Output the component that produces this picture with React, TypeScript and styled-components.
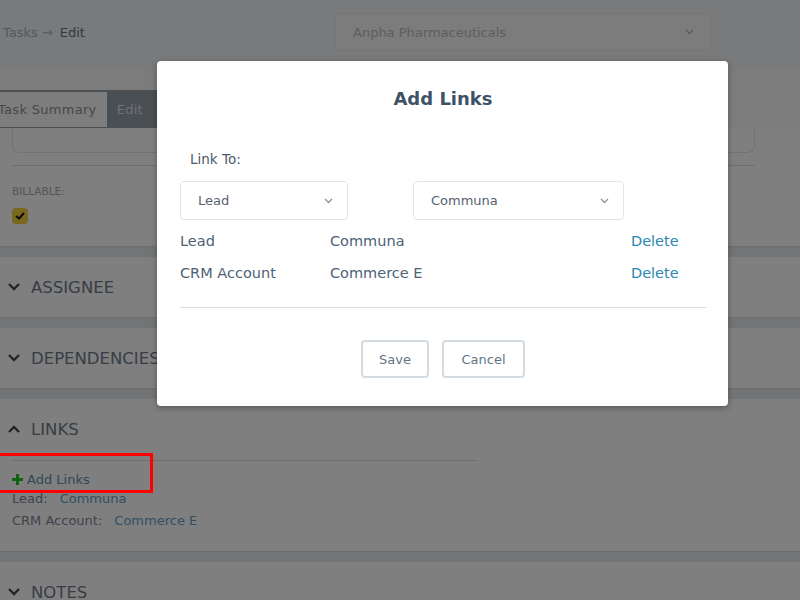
import styled, { createGlobalStyle } from "styled-components";

const GlobalStyle = createGlobalStyle`
  html, body {
    margin: 0;
    padding: 0;
    height: 100%;
    overflow: hidden;
  }
  body {
    font-family: "DejaVu Sans", "Noto Sans", sans-serif;
    background: #e6e8eb;
  }
`;

const Page = styled.div`
  position: relative;
  width: 800px;
  height: 600px;
  overflow: hidden;
  background: #e6e8eb;
`;

const Header = styled.header`
  height: 70px;
  box-sizing: border-box;
  padding: 13px 89px 0 3px;
  display: flex;
  align-items: flex-start;
  justify-content: space-between;
  background: #f3f4f6;
`;

const Crumbs = styled.div`
  display: flex;
  align-items: center;
  gap: 4px;
  height: 38px;
  font-size: 13px;
  color: #aab0ba;
  span:last-child {
    color: #6c7078;
    margin-left: 3px;
  }
`;

const OrgSelect = styled.div`
  width: 376px;
  height: 38px;
  box-sizing: border-box;
  padding: 0 16px 0 17px;
  display: flex;
  align-items: center;
  justify-content: space-between;
  background: #f8f8f8;
  border: 1px solid #ececec;
  border-radius: 4px;
  font-size: 13px;
  color: #bcbcbc;
`;

const SubBar = styled.div`
  height: 20px;
  background: #f8f9fa;
`;

const TabRow = styled.div`
  height: 38px;
  background: #f8f9fa;
  display: flex;
`;

const TabGroup = styled.div`
  display: flex;
  margin-left: -14px;
  padding: 2px 0 1px 2px;
  background: #949ea9;
`;

const Tab = styled.div<{ $active?: boolean }>`
  display: flex;
  align-items: center;
  padding: 0 10px;
  font-size: 13px;
  letter-spacing: 0.3px;
  background: ${(p) => (p.$active ? "transparent" : "#fbfbfb")};
  color: ${(p) => (p.$active ? "#dfe3e8" : "#8a9099")};
  min-width: ${(p) => (p.$active ? "60px" : "auto")};
`;

const Card = styled.section`
  background: #ffffff;
  padding: 0 45px 22px 12px;
  border-bottom: 1px solid #d8dbe0;
  margin-bottom: 10px;
`;

const Field = styled.div`
  height: 24px;
  border: 1px solid #e1e4e8;
  border-top: none;
  border-radius: 0 0 8px 8px;
`;

const Rule = styled.div<{ $width?: string }>`
  height: 1px;
  width: ${(p) => p.$width || "100%"};
  background: #dcdfe3;
`;

const SmallLabel = styled.div`
  margin-top: 19px;
  font-size: 10.5px;
  line-height: 13px;
  color: #a4acb6;
`;

const Check = styled.div`
  margin-top: 10px;
  width: 16px;
  height: 16px;
  border-radius: 4px;
  background: #f2d03c;
  display: flex;
  align-items: center;
  justify-content: center;
`;

const Section = styled.section`
  background: #ffffff;
  border-bottom: 1px solid #d8dbe0;
  margin-bottom: 10px;
`;

const SectionHead = styled.div`
  height: 60px;
  display: flex;
  align-items: center;
  gap: 11px;
  padding-left: 8px;
  font-size: 16.5px;
  color: #707a8a;
  white-space: nowrap;
`;

const LinksBody = styled.div`
  padding: 1px 12px 22px;
`;

const AddLink = styled.div`
  margin-top: 9px;
  display: flex;
  align-items: center;
  gap: 4px;
  height: 18px;
  font-size: 13px;
  color: #5c8fb0;
`;

const LinkLine = styled.div<{ $gap?: number }>`
  display: flex;
  gap: ${(p) => p.$gap || 12}px;
  margin-top: ${(p) => (p.$gap ? 4 : 1)}px;
  height: 18px;
  align-items: center;
  font-size: 13px;
  color: #7c8598;
  b {
    font-weight: normal;
    color: #5e9fc6;
  }
`;

const Overlay = styled.div`
  position: absolute;
  inset: 0;
  background: rgba(0, 0, 0, 0.5);
`;

const Annotation = styled.div`
  position: absolute;
  left: -5px;
  top: 453px;
  width: 158px;
  height: 40px;
  box-sizing: border-box;
  border: 3px solid #ff0000;
`;

const Modal = styled.div`
  position: absolute;
  left: 157px;
  top: 61px;
  width: 571px;
  height: 345px;
  box-sizing: border-box;
  padding: 27px 22px 0 23px;
  background: #ffffff;
  border-radius: 4px;
  box-shadow: 0 2px 6px rgba(0, 0, 0, 0.3);
`;

const Title = styled.h2`
  margin: 0;
  text-align: center;
  font-size: 18px;
  line-height: 22px;
  font-weight: bold;
  color: #3e5266;
`;

const FieldLabel = styled.div`
  margin-top: 40px;
  padding-left: 10px;
  font-size: 13.5px;
  line-height: 18px;
  color: #4b5a6a;
`;

const SelectRow = styled.div`
  margin-top: 13px;
  display: flex;
  gap: 65px;
`;

const Select = styled.div<{ $width: number }>`
  width: ${(p) => p.$width}px;
  height: 39px;
  box-sizing: border-box;
  padding: 0 14px 0 17px;
  display: flex;
  align-items: center;
  justify-content: space-between;
  border: 1px solid #e2e6ec;
  border-radius: 4px;
  font-size: 13px;
  color: #56626f;
`;

const LinkTable = styled.div`
  margin-top: 5px;
  display: grid;
  grid-template-columns: 150px 1fr 75px;
  grid-auto-rows: 32px;
  align-items: center;
  font-size: 14.5px;
  color: #4e6175;
`;

const DeleteLink = styled.span`
  color: #2e86b0;
  cursor: pointer;
`;

const Divider = styled.div`
  margin-top: 18px;
  height: 1px;
  background: #d9dde2;
`;

const Actions = styled.div`
  margin-top: 32px;
  display: flex;
  justify-content: center;
  gap: 13px;
`;

const Button = styled.button<{ $width: number }>`
  width: ${(p) => p.$width}px;
  height: 38px;
  background: #ffffff;
  border: 2px solid #d3dbe3;
  border-radius: 4px;
  font-family: inherit;
  font-size: 13px;
  color: #637487;
`;

const Chevron = ({ up = false }: { up?: boolean }) => (
  <svg width="12" height="8" viewBox="0 0 12 8">
    <polyline
      points={up ? "1,7 6,2 11,7" : "1,1 6,6 11,1"}
      fill="none"
      stroke="#434a55"
      strokeWidth="2.4"
    />
  </svg>
);

const Caret = ({ color = "#8693a1" }: { color?: string }) => (
  <svg width="9" height="6" viewBox="0 0 9 6">
    <polyline points="1,1 4.5,4.5 8,1" fill="none" stroke={color} strokeWidth="1.3" />
  </svg>
);

const links = [
  { type: "Lead", name: "Communa" },
  { type: "CRM Account", name: "Commerce E" },
];

export default function App() {
  return (
    <Page>
      <GlobalStyle />
      <Header>
        <Crumbs>
          <span>Tasks</span>
          <span>→</span>
          <span>Edit</span>
        </Crumbs>
        <OrgSelect>
          Anpha Pharmaceuticals
          <Caret color="#b0b0b0" />
        </OrgSelect>
      </Header>
      <SubBar />
      <TabRow>
        <TabGroup>
          <Tab>Task Summary</Tab>
          <Tab $active>Edit</Tab>
        </TabGroup>
      </TabRow>
      <Card>
        <Field />
        <Rule style={{ marginTop: 12 }} />
        <SmallLabel>BILLABLE:</SmallLabel>
        <Check>
          <svg width="10" height="8" viewBox="0 0 10 8">
            <polyline points="1,4 4,6.5 9,1" fill="none" stroke="#1a1a1a" strokeWidth="2" />
          </svg>
        </Check>
      </Card>
      <Section>
        <SectionHead>
          <Chevron />
          ASSIGNEE
        </SectionHead>
      </Section>
      <Section>
        <SectionHead>
          <Chevron />
          DEPENDENCIES
        </SectionHead>
      </Section>
      <Section>
        <SectionHead>
          <Chevron up />
          LINKS
        </SectionHead>
        <LinksBody>
          <Rule $width="465px" />
          <AddLink>
            <svg width="11" height="11" viewBox="0 0 11 11">
              <path d="M5.5 0v11M0 5.5h11" stroke="#22c322" strokeWidth="3" />
            </svg>
            Add Links
          </AddLink>
          <LinkLine>
            Lead: <b>Communa</b>
          </LinkLine>
          <LinkLine $gap={12}>
            CRM Account: <b>Commerce E</b>
          </LinkLine>
        </LinksBody>
      </Section>
      <Section>
        <SectionHead>
          <Chevron />
          NOTES
        </SectionHead>
      </Section>

      <Overlay />
      <Annotation />

      <Modal>
        <Title>Add Links</Title>
        <FieldLabel>Link To:</FieldLabel>
        <SelectRow>
          <Select $width={168}>
            Lead
            <Caret />
          </Select>
          <Select $width={211}>
            Communa
            <Caret />
          </Select>
        </SelectRow>
        <LinkTable>
          {links.map((l) => (
            <>
              <span key={l.type + "t"}>{l.type}</span>
              <span key={l.type + "n"}>{l.name}</span>
              <DeleteLink key={l.type + "d"}>Delete</DeleteLink>
            </>
          ))}
        </LinkTable>
        <Divider />
        <Actions>
          <Button $width={68}>Save</Button>
          <Button $width={83}>Cancel</Button>
        </Actions>
      </Modal>
    </Page>
  );
}
